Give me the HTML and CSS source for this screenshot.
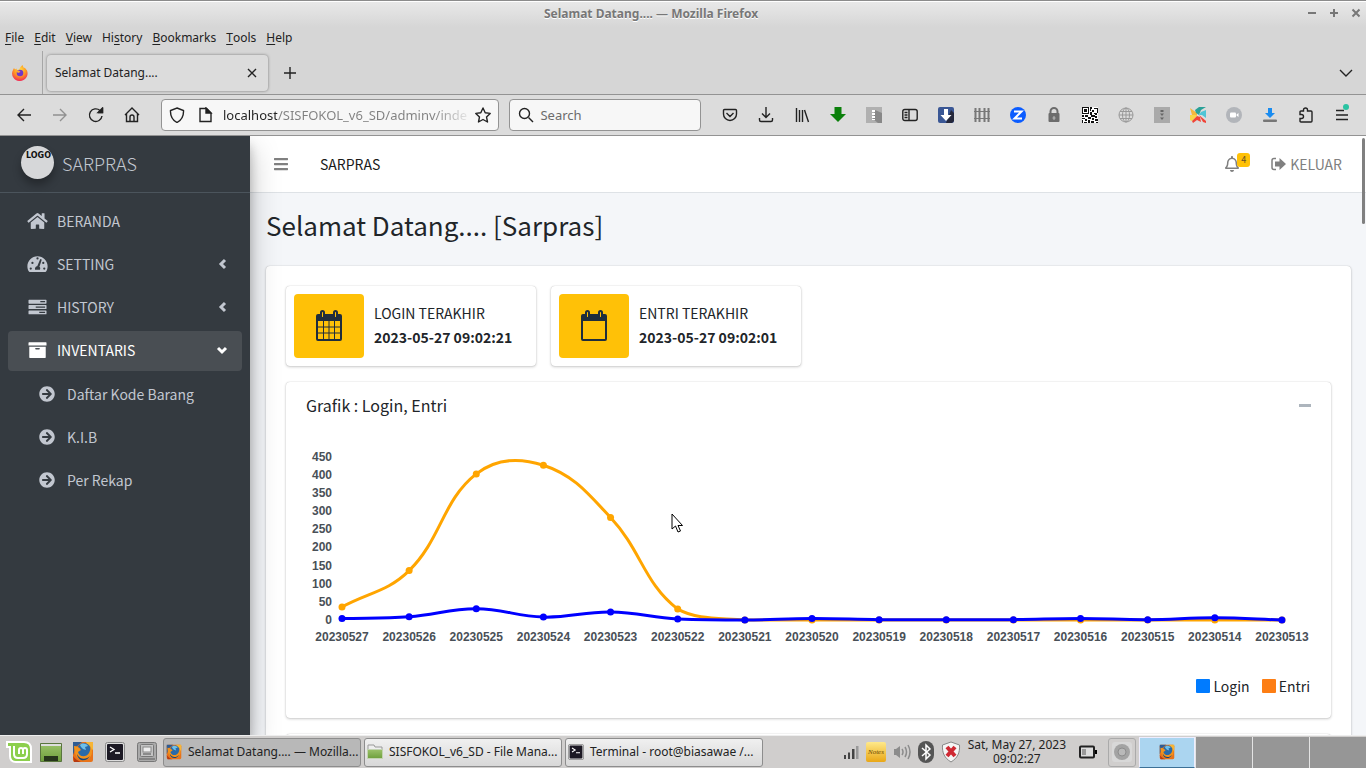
FILE: index.html
```html
<!DOCTYPE html>
<html lang="id">
<head>
<meta charset="utf-8">
<title>Selamat Datang....</title>
<link rel="stylesheet" href="styles.css">
</head>
<body>
<svg class="defs" aria-hidden="true">
  <defs>
    <radialGradient id="fx" cx="50%" cy="30%" r="75%"><stop offset="0" stop-color="#ffe14a"/><stop offset=".5" stop-color="#ff9a1f"/><stop offset="1" stop-color="#f0195e"/></radialGradient>
    <linearGradient id="folder" x2="0" y2="1"><stop offset="0" stop-color="#9bc26a"/><stop offset="1" stop-color="#6e9f3c"/></linearGradient>
    <linearGradient id="note" x2="0" y2="1"><stop offset="0" stop-color="#ffe98a"/><stop offset="1" stop-color="#e9a716"/></linearGradient>
    <symbol id="old-firefox" viewBox="0 0 22 22"><rect x="1" y="1" width="20" height="20" rx="2" fill="#e8731a"/><path d="M1 1h9L4 6 1 14z" fill="#2e5c94"/><path d="M14 1h7v7l-3 4z" fill="#f7b535"/><circle cx="12" cy="9" r="7" fill="#2a6aa8"/><path d="M8 4c3-3 7-1 8 1l-3 1 1 3-3-1-2-2z" fill="#6ec0ea"/><path d="M2 5c3 0 5 1 7 4l-3 2c1 5 8 6 11 1 1-2 2-5 1-7 4 5 2 12-4 14-7 2-12-4-12-14z" fill="#f2921c"/><path d="M5 13c3 6 9 6 13 2-3 6-12 6-13-2z" fill="#13447d"/><path d="M1 15c2 3 5 5 8 6H2z" fill="#b73a12"/></symbol>
    <symbol id="term" viewBox="0 0 20 20"><rect x=".5" y=".5" width="19" height="19" rx="2" fill="#ddd" stroke="#888"/><rect x="2" y="2" width="16" height="16" rx="1" fill="#1c1924"/><path d="M5 5l4 2.500-4 2.500M10 11h5" fill="none" stroke="#fff" stroke-width="1.300"/></symbol>
    <symbol id="go" viewBox="0 0 512 512"><path d="M256 8c137 0 248 111 248 248S393 504 256 504 8 393 8 256 119 8 256 8zm-28.900 143.600l75.500 72.400H120c-13.300 0-24 10.700-24 24v16c0 13.300 10.700 24 24 24h182.600l-75.500 72.400c-9.700 9.300-9.900 24.800-.4 34.300l11 10.900c9.400 9.400 24.600 9.400 33.900 0L404.300 273c9.400-9.400 9.400-24.600 0-33.900L271.600 106.300c-9.400-9.400-24.600-9.400-33.900 0l-11 10.900c-9.500 9.600-9.300 25.100.4 34.400z"/></symbol>
    <symbol id="dl-arrow" viewBox="0 0 16 16"><path d="M4.500 0h7v7H16l-8 8-8-8h4.500z"/></symbol>
  </defs>
</svg>

<header class="titlebar">
  <span class="window-title">Selamat Datang.... — Mozilla Firefox</span>
  <div class="window-controls">
    <button aria-label="Minimize"><svg viewBox="0 0 10 10"><path d="M1 5h8"/></svg></button>
    <button aria-label="Maximize"><svg viewBox="0 0 10 10"><path d="M1 5h8M5 1v8"/></svg></button>
    <button aria-label="Close window"><svg viewBox="0 0 10 10"><path d="M1.500 1.500l7 7M8.500 1.500l-7 7"/></svg></button>
  </div>
</header>
<nav class="menubar" aria-label="Menu">
  <button><u>F</u>ile</button><button><u>E</u>dit</button><button><u>V</u>iew</button><button>Hi<u>s</u>tory</button><button><u>B</u>ookmarks</button><button><u>T</u>ools</button><button><u>H</u>elp</button>
</nav>
<div class="tabstrip">
  <button class="fx-view" aria-label="Firefox View"><svg width="16" height="16" viewBox="0 0 16 16"><path d="M8 16A7.500 7.500 0 0 1 1 5l1-2 1 1.500 1.500-1L5 5l2-.5C8 3 9 1 10.500 0l1 2.500 1.500.5 2 2.500A7.600 7.600 0 0 1 8 16z" fill="url(#fx)"/><circle cx="8" cy="8" r="3.300" fill="#7036c8"/><path d="M4 6c2-1 4 0 4.500 1L6 8z" fill="#ffa436"/></svg></button>
  <div class="tab"><span>Selamat Datang....</span><button aria-label="Close tab"><svg class="ln" width="10" height="10" viewBox="0 0 10 10"><path d="M1 1l8 8M9 1l-8 8"/></svg></button></div>
  <button class="new-tab" aria-label="New tab"><svg class="ln" width="14" height="14" viewBox="0 0 14 14"><path d="M7 1v12M1 7h12"/></svg></button>
  <button class="all-tabs" aria-label="List all tabs"><svg class="ln" width="14" height="8" viewBox="0 0 14 8"><path d="M1 1l6 6 6-6"/></svg></button>
</div>
<div class="toolbar">
  <div class="tools">
    <button aria-label="Back"><svg class="ln" viewBox="0 0 16 16"><path d="M15 8H2M8 2L2 8l6 6"/></svg></button>
    <button aria-label="Forward" disabled><svg class="ln" viewBox="0 0 16 16"><path d="M1 8h13M8 2l6 6-6 6"/></svg></button>
    <button aria-label="Reload"><svg class="ln" viewBox="0 0 16 16"><path d="M14 9A6.300 6.300 0 1 1 12 3.500L14 5M14.500 1v4.500H10"/><path d="M14.500 1v4.500H10z" fill="#222"/></svg></button>
    <button aria-label="Home"><svg class="ln" viewBox="0 0 16 16"><path d="M1 8l7-7 7 7M2.500 7v7.500h11V7M6 14v-4a2 2 0 0 1 4 0v4"/></svg></button>
  </div>
  <div class="field url">
    <svg class="ln" viewBox="0 0 16 16"><path d="M8 1l6.500 2.500c.3 6-2 9.500-6.500 12-4.500-2.500-6.800-6-6.500-12z"/></svg>
    <svg class="ln page" viewBox="0 0 16 16"><path d="M3 1.500h6.500L14 6v8.500H3z"/><path d="M9 1l5 5H9z" fill="#222"/></svg>
    <input type="text" aria-label="Address" value="localhost/SISFOKOL_v6_SD/adminv/index.php">
    <svg class="ln" viewBox="0 0 16 16"><path d="M8 1l2.200 4.700 5 .7-3.700 3.500 1 5.100L8 12.500 3.500 15l1-5.100L.8 6.400l5-.7z" stroke-linejoin="round"/></svg>
  </div>
  <div class="field search">
    <svg class="ln" viewBox="0 0 16 16"><circle cx="6.500" cy="6.500" r="5"/><path d="M10.500 10.500L15 15"/></svg>
    <input type="search" aria-label="Search" placeholder="Search">
  </div>
  <div class="tools">
    <button aria-label="Pocket"><svg class="ln" viewBox="0 0 16 16"><path d="M2.500 2.500h11q1 0 1 1V7a6.500 6.500 0 0 1-13 0V3.500q0-1 1-1zM4.500 6L8 9.500 11.500 6"/></svg></button>
    <button aria-label="Downloads"><svg class="ln" viewBox="0 0 16 16"><path d="M8 0v10M4 6.500L8 10.500l4-4M1.500 11v2q0 1.500 1.500 1.500h10q1.500 0 1.500-1.500v-2"/></svg></button>
    <button aria-label="Library"><svg class="ln" viewBox="0 0 16 16"><path d="M2.500 1v14M5.500 3v12M8.500 3v12M10.500 3l4 12"/></svg></button>
    <button aria-label="Download helper"><svg viewBox="0 0 16 16" fill="#0b800b"><use href="#dl-arrow"/></svg></button>
    <button aria-label="Archive"><svg viewBox="0 0 16 16"><path fill="#b0b0b0" d="M0 0h16v16H0z"/><path fill="#888" d="M9 3l7 3v10H12l-5-4z"/><path stroke="#fff" stroke-width="3" stroke-dasharray="2 1" d="M7.500 3v10"/></svg></button>
    <button aria-label="Sidebars"><svg class="ln" viewBox="0 0 16 16"><rect x=".8" y="2.500" width="14.400" height="11" rx="2"/><path d="M7 2.500v11M2.500 5.500h3M2.500 8h3M2.500 10.500h3"/></svg></button>
    <button aria-label="Save"><svg viewBox="0 0 16 16"><rect width="16" height="16" rx="2" fill="#3a5795"/><path d="M13 3l3 3v8l-2 2H8z" fill="#24273a"/><path d="M6 2h4v6h3.500L8 14 2.500 8H6z" fill="#fff"/></svg></button>
    <button aria-label="Grid"><svg viewBox="0 0 16 16"><path d="M1.500 1v14M5.500 1v14M10.500 1v14M14.500 1v14" stroke="#777" stroke-width="2"/><path d="M0 4.500h16M0 11.500h16" stroke="#777"/></svg></button>
    <button aria-label="Zoom"><svg viewBox="0 0 16 16"><circle cx="8" cy="8" r="8" fill="#0b5cff"/><path d="M4 4.500h7.500l-7 7H12" fill="none" stroke="#fff" stroke-width="2"/></svg></button>
    <button aria-label="Lock"><svg viewBox="0 0 16 16"><path d="M4.500 8V4.500a3.500 3.500 0 0 1 7 0V8" fill="none" stroke="#6c6c6c" stroke-width="2"/><rect x="2.500" y="6" width="11" height="9" rx="1" fill="#6c6c6c"/><path d="M8 9v4M6.500 11h3" stroke="#bbb"/></svg></button>
    <button aria-label="QR code"><svg viewBox="0 0 16 16" shape-rendering="crispEdges"><path fill="#fff" d="M0 0h16v16H0z"/><path fill="#111" fill-rule="evenodd" d="M0 0h7v7H0zm1 1v5h5V1zM2 2h3v3H2zM12 1h4v5h-1V2h-3zM8 0h2v2H8zM10 3h2v2h-2zM8 5h2v3H8zM12 6h3v2h-3zM0 8h2v2H0zM3 8h3v2H3zM6 10h3v2H6zM0 11h3v1H0zM3 12h2v2H3zM0 13h1v3H0zM2 15h3v1H2zM6 13h2v3H6zM9 8h3v2H9zM13 9h2v2h-2zM10 11h2v2h-2zM9 14h3v2H9zM13 12h3v2h-3zM14 15h2v1h-2zM8 2h1v2H8zM12 7h1v3h-1z"/></svg></button>
    <button aria-label="Network"><svg viewBox="0 0 16 16" fill="none" stroke="#999"><circle cx="8" cy="8" r="7"/><ellipse cx="8" cy="8" rx="3.500" ry="7"/><path d="M8 1v14M1 8h14M2 4.500h12M2 11.500h12"/></svg></button>
    <button aria-label="Compress"><svg viewBox="0 0 16 16"><path fill="#aaa" d="M0 0h16v16H0z"/><path fill="#666" d="M6.500 3h3v2h-3zM6 6.500h4L8 9zM6 10.500h4L8 13z"/></svg></button>
    <button aria-label="Pinwheel"><svg viewBox="0 0 16 16"><path fill="#f5b83d" d="M0 1l7 5v3L2 8z"/><path fill="#f9d548" d="M0 8l6 0 1 1-5 5-2-1z"/><path fill="#2aa198" d="M5 3l4-3h7l-5 3-2 5-3-2z"/><path fill="#4fc5d6" d="M11 5l5-2v8l-4-3-3 0z"/><path fill="#f04438" d="M7 9l3 1 1 5-4-2-4 3-1-2z"/><path fill="#f04438" d="M9 8l7 6v2l-3-1z"/></svg></button>
    <button aria-label="Meetings"><svg viewBox="0 0 16 16"><circle cx="8" cy="8" r="8" fill="#b2b5ba"/><rect x="4" y="5.500" width="6" height="5" rx="1" fill="#fff"/><path d="M10.500 7.500l2-1.500v4l-2-1.500z" fill="#fff"/></svg></button>
    <button aria-label="Download manager"><svg viewBox="0 0 16 16"><path d="M6 1h4v5h3l-5 5-5-5h3z" fill="#1a8cf0"/><rect x="1" y="12.500" width="14" height="2.500" rx="1" fill="#777"/></svg></button>
    <button aria-label="Extensions"><svg class="ln" viewBox="0 0 16 16"><path d="M2 5q0-1 1-1h2.500V3a2 2 0 0 1 4 0v1H13q1 0 1 1v9q0 1-1 1H3q-1 0-1-1v-2.500h1.500a2 2 0 0 0 0-4H2z"/></svg></button>
    <button aria-label="Application menu" class="app-menu"><svg class="ln" viewBox="0 0 16 16"><path d="M2 3.500h8M2 8h12M2 12.500h12"/></svg><i></i></button>
  </div>
</div>

<div class="viewport">
  <aside class="sidebar">
    <a class="brand" href="#"><span class="logo">LOGO</span><span>SARPRAS</span></a>
    <nav aria-label="Sidebar">
      <a href="#"><svg viewBox="0 0 576 512"><path d="M280.370 148.260L96 300.110V464a16 16 0 0 0 16 16l112.060-.29a16 16 0 0 0 15.920-16V368a16 16 0 0 1 16-16h64a16 16 0 0 1 16 16v95.640a16 16 0 0 0 16 16.050L464 480a16 16 0 0 0 16-16V300L295.670 148.260a12.190 12.190 0 0 0-15.300 0zM571.600 251.470L488 182.560V44.050a12 12 0 0 0-12-12h-56a12 12 0 0 0-12 12v72.610L318.470 43a48 48 0 0 0-61 0L4.340 251.470a12 12 0 0 0-1.600 16.900l25.500 31A12 12 0 0 0 45.150 301l235.220-193.740a12.190 12.190 0 0 1 15.300 0L530.900 301a12 12 0 0 0 16.900-1.600l25.500-31a12 12 0 0 0-1.700-16.930z"/></svg><span>BERANDA</span></a>
      <a href="#"><svg viewBox="0 0 576 512"><path fill-rule="evenodd" d="M288 32C129 32 0 161 0 320c0 53 14 102 39 145 6 9 16 15 27 15h444c11 0 21-6 27-15 25-43 39-92 39-145C576 161 447 32 288 32zM288 64a32 32 0 1 1 0 64 32 32 0 1 1 0-64zM96 352a32 32 0 1 1 0 64 32 32 0 1 1 0-64zm48-160a32 32 0 1 1 0 64 32 32 0 1 1 0-64zm214-59c4-13 18-20 31-16 12 4 19 18 15 31l-61 184c25 20 30 50 14 84H219c-14-45 13-92 61-96zm94 59a32 32 0 1 1 0 64 32 32 0 1 1 0-64zm28 160a32 32 0 1 1 0 64 32 32 0 1 1 0-64z"/></svg><span>SETTING</span><svg class="chev" viewBox="0 0 12 12"><path d="M9 2L5 6l4 4"/></svg></a>
      <a href="#"><svg viewBox="0 0 576 512"><path fill-rule="evenodd" d="M48 48h480q16 0 16 16v80q0 16-16 16H48q-16 0-16-16V64q0-16 16-16zm320 40v34h136V88zM48 200h480q16 0 16 16v80q0 16-16 16H48q-16 0-16-16v-80q0-16 16-16zm190 40v34h266v-34zM48 352h480q16 0 16 16v80q0 16-16 16H48q-16 0-16-16v-80q0-16 16-16zm290 40v34h166v-34z"/></svg><span>HISTORY</span><svg class="chev" viewBox="0 0 12 12"><path d="M9 2L5 6l4 4"/></svg></a>
      <a href="#" class="active"><svg viewBox="0 0 576 512"><path fill-rule="evenodd" d="M48 32h480q16 0 16 16v80H32V48q0-16 16-16zM54 160h468v304q0 16-16 16H70q-16 0-16-16zm170 48v12q0 20 20 20h88q20 0 20-20v-12q0-8-8-8H232q-8 0-8 8z"/></svg><span>INVENTARIS</span><svg class="chev" viewBox="0 0 12 12"><path d="M2 4l4 4 4-4"/></svg></a>
      <a href="#" class="sub"><svg><use href="#go"/></svg><span>Daftar Kode Barang</span></a>
      <a href="#" class="sub"><svg><use href="#go"/></svg><span>K.I.B</span></a>
      <a href="#" class="sub"><svg><use href="#go"/></svg><span>Per Rekap</span></a>
    </nav>
  </aside>
  <div class="page-area">
    <header class="topnav">
      <button class="burger" aria-label="Toggle sidebar"><svg width="14" height="16" viewBox="0 0 448 512"><path d="M16 132h416c9 0 16-7 16-16V76c0-9-7-16-16-16H16C7 60 0 67 0 76v40c0 9 7 16 16 16zm0 160h416c9 0 16-7 16-16v-40c0-9-7-16-16-16H16c-9 0-16 7-16 16v40c0 9 7 16 16 16zm0 160h416c9 0 16-7 16-16v-40c0-9-7-16-16-16H16c-9 0-16 7-16 16v40c0 9 7 16 16 16z"/></svg></button>
      <a class="section" href="#">SARPRAS</a>
      <a class="bell" href="#" aria-label="Notifications"><svg width="14" height="16" viewBox="0 0 448 512"><path d="M439.390 362.290c-19.320-20.760-55.470-51.990-55.470-154.290 0-77.700-54.480-139.900-127.940-155.160V32c0-17.670-14.320-32-31.980-32s-31.980 14.330-31.980 32v20.840C118.560 68.100 64.080 130.300 64.080 208c0 102.300-36.150 133.530-55.470 154.290-6 6.450-8.660 14.160-8.610 21.710.11 16.400 12.980 32 32.100 32h383.800c19.120 0 32-15.600 32.100-32 .05-7.550-2.610-15.270-8.610-21.710zM67.530 368c21.220-27.970 44.420-74.330 44.530-159.420 0-.2-.06-.38-.06-.58 0-61.860 50.140-112 112-112s112 50.140 112 112c0 .2-.06.38-.06.58.11 85.100 23.310 131.460 44.530 159.420H67.530zM224 512c35.320 0 63.970-28.650 63.970-64H160.030c0 35.350 28.650 64 63.970 64z"/></svg><b>4</b></a>
      <a class="logout" href="#"><svg width="15" height="14" viewBox="0 0 15 14"><path d="M5 1.500H3q-2 0-2 2v7q0 2 2 2h2" fill="none" stroke="currentColor" stroke-width="1.500"/><path d="M4 4.500H8.500V1L15 7l-6.500 6V9.500h-4.500z"/></svg>KELUAR</a>
    </header>
    <main>
      <h1>Selamat Datang.... [Sarpras]</h1>
      <section class="card outer">
        <div class="infos">
          <div class="card info">
            <span class="tile"><svg width="30" height="34" viewBox="0 0 30 34"><path fill-rule="evenodd" d="M4 5h22q2 0 2 2v23q0 2-2 2H4q-2 0-2-2V7q0-2 2-2zm0 7v18h22V12z"/><path d="M9.500 11v19M15 11v19M20.500 11v19M4 18h22M4 24h22" stroke="#1f2d3d"/><g fill="#ffc107" stroke="#1f2d3d" stroke-width="2"><rect x="7" y="2" width="3" height="7" rx="1.500"/><rect x="20" y="2" width="3" height="7" rx="1.500"/></g></svg></span>
            <p>LOGIN TERAKHIR<strong>2023-05-27 09:02:21</strong></p>
          </div>
          <div class="card info">
            <span class="tile"><svg width="30" height="34" viewBox="0 0 30 34"><path fill-rule="evenodd" d="M4 5h22q2 0 2 2v23q0 2-2 2H4q-2 0-2-2V7q0-2 2-2zm0 7v18h22V12z"/><g fill="#ffc107" stroke="#1f2d3d" stroke-width="2"><rect x="7" y="2" width="3" height="7" rx="1.500"/><rect x="20" y="2" width="3" height="7" rx="1.500"/></g></svg></span>
            <p>ENTRI TERAKHIR<strong>2023-05-27 09:02:01</strong></p>
          </div>
        </div>
        <article class="card chart-card">
          <header><h2>Grafik : Login, Entri</h2><button aria-label="Collapse"><svg width="12" height="3" viewBox="0 0 12 3"><path d="M0 0h12v3H0z"/></svg></button></header>
          <svg class="chart" id="chart" viewBox="0 0 1005 200" role="img" aria-label="Grafik Login, Entri"></svg>
          <div class="legend"><span><i class="login"></i>Login</span><span><i class="entri"></i>Entri</span></div>
        </article>
        <article class="card next-card"></article>
      </section>
    </main>
    <i class="scroll-thumb"></i>
  </div>
  <svg class="pointer" width="12" height="20" viewBox="0 0 12 20"><path d="M1 1v15l3.500-3 2.500 6 2.500-1L7 12.500h4.500z" fill="#fff" stroke="#000"/></svg>
</div>

<footer class="taskbar">
  <div class="launchers">
    <button aria-label="Menu"><svg width="26" height="22" viewBox="0 0 26 22"><path d="M1 1h17q7 0 7 7v13H10q-6 0-6-6V6H1z" fill="#8ccf4d" stroke="#fff" stroke-width="2"/><path d="M8 5v8q0 4 4 4h5q4 0 4-4V9q0-2-2-2t-2 2v4M17 9q0-2-2-2t-2 2v4" fill="none" stroke="#fff" stroke-width="2"/></svg></button>
    <button aria-label="Show desktop"><svg width="22" height="19" viewBox="0 0 22 19"><path d="M.5.500h21v18H.5z" fill="url(#folder)" stroke="#59753e"/><path d="M1 1h20v2H1z" fill="#ddd"/><path d="M4 13h14v5H4z" fill="#26351b"/></svg></button>
    <button aria-label="Firefox"><svg width="22" height="22"><use href="#old-firefox"/></svg></button>
    <button aria-label="Terminal"><svg width="20" height="20"><use href="#term"/></svg></button>
    <button aria-label="Files"><svg width="20" height="20" viewBox="0 0 20 20"><rect x=".5" y=".5" width="19" height="19" rx="2" fill="#aaa" stroke="#777"/><rect x="3.500" y="2.500" width="13" height="12" rx="1" fill="#c4c4c4" stroke="#777"/><rect x="6" y="5" width="8" height="5" fill="#eee" stroke="#888"/><path d="M6 12h8M2 17h16" stroke="#777" stroke-width="1.500"/></svg></button>
  </div>
  <div class="tasks">
    <button class="on"><svg width="16" height="16"><use href="#old-firefox"/></svg><span>Selamat Datang.... — Mozilla...</span></button>
    <button><svg width="16" height="16" viewBox="0 0 16 16"><path d="M1 1h6l1 2h7v4H1z" fill="#eee" stroke="#999"/><path d="M.5 5.500h15v9H.5z" fill="url(#folder)" stroke="#c3d3b2"/></svg><span>SISFOKOL_v6_SD - File Mana...</span></button>
    <button><svg width="16" height="16" viewBox="0 0 20 20"><use href="#term"/></svg><span>Terminal - root@biasawae /...</span></button>
  </div>
  <div class="tray">
    <svg width="16" height="16" viewBox="0 0 16 16" fill="#444"><path d="M1 11h2v4H1zM5 8.500h2V15H5zM9 5h2.500v10H9z"/><path d="M13 2h2.500v13H13z" fill="#999"/></svg>
    <svg width="20" height="20" viewBox="0 0 20 20"><rect width="20" height="20" rx="2" fill="url(#note)"/><text x="2" y="12" class="note-text">Notes</text></svg>
    <svg width="18" height="18" viewBox="0 0 18 18" fill="none" stroke="#8c8c8c" stroke-width="1.500"><path d="M1 6h2l4-3v12l-4-3H1z" fill="#8c8c8c" stroke="none"/><path d="M9 6q2 3 0 6M12 4q3 5 0 10M15 2q4 7 0 14"/></svg>
    <svg width="16" height="22" viewBox="0 0 16 22"><rect width="16" height="22" rx="8" fill="#555"/><path d="M4 7l8 7-4 4V4l4 4-8 7" fill="none" stroke="#fff" stroke-width="1.500"/></svg>
    <svg width="20" height="22" viewBox="0 0 20 22"><path d="M10 1l8.500 3c.5 8-2 13-8.500 17C3.500 17 1 12 1.500 4z" fill="#f5f5f5" stroke="#888"/><path d="M6 6l8 9M14 6l-8 9" stroke="#cf2933" stroke-width="4"/></svg>
  </div>
  <time><span>Sat, May 27, 2023</span><span>09:02:27</span></time>
  <svg class="battery" width="18" height="14" viewBox="0 0 18 14"><rect x="1" y="1.500" width="14" height="11" rx="1" fill="#ddd" stroke="#222" stroke-width="2"/><path d="M3 4h4v6H3z" fill="#999"/><path d="M16 5h2v4h-2z"/></svg>
  <button class="gear" aria-label="Panel plugin"><svg width="20" height="20" viewBox="0 0 20 20"><rect width="20" height="20" rx="3" fill="#d8d8d8"/><circle cx="10" cy="10" r="8" fill="#a3a3a3"/><circle cx="10" cy="10" r="4" fill="#b9b9b9" stroke="#8d8d8d"/></svg></button>
  <div class="workspaces"><button class="on" aria-label="Workspace 1"><svg width="16" height="16"><use href="#old-firefox"/></svg></button><button aria-label="Workspace 2"></button><button aria-label="Workspace 3"></button><button aria-label="Workspace 4"></button></div>
</footer>
<script src="chart.js"></script>
</body>
</html>
```
FILE: styles.css
```css
* { box-sizing: border-box; }
body {
  margin: 0;
  height: 100vh;
  display: flex;
  flex-direction: column;
  overflow: hidden;
  background: #d6d6d6;
  color: #222;
  font: 12px/16px "Noto Sans", sans-serif;
}
button {
  padding: 0;
  border: 0;
  background: none;
  color: inherit;
  font: inherit;
  display: flex;
  align-items: center;
  justify-content: center;
}
a { color: inherit; text-decoration: none; }
svg { flex: none; display: block; }
.defs { position: absolute; width: 0; height: 0; }
.ln { fill: none; stroke: #222; stroke-width: 1.4; }

.titlebar {
  display: flex;
  height: 27px;
  align-items: center;
  justify-content: center;
  position: relative;
  border-top: 1px solid #8c8c8c;
  box-shadow: inset 0 1px #fff;
  background: linear-gradient(#e9e9e9, #d6d6d6);
}
.window-title { padding-right: 64px; color: #777; font-weight: bold; text-shadow: 0 1px #fff; }
.window-controls { position: absolute; right: 5px; top: 7px; display: flex; gap: 12px; }
.window-controls svg { width: 10px; height: 10px; stroke: #777; stroke-width: 2; }

.menubar { display: flex; height: 22px; padding-left: 5px; gap: 10px; }
.menubar u { text-underline-offset: 2px; }

.tabstrip {
  display: flex;
  align-items: center;
  height: 46px;
  padding-top: 2px;
  border-bottom: 1px solid #939393;
}
.fx-view { width: 43px; height: 43px; padding-right: 3px; border-right: 1px solid #a6a6a6; }
.tab {
  display: flex;
  align-items: center;
  justify-content: space-between;
  width: 221px;
  height: 36px;
  margin-left: 4px;
  padding: 0 11px 0 8px;
  border-radius: 4px;
  background: #dcdcdc;
  box-shadow: 0 0 3px #777;
}
.new-tab { margin-left: 15px; }
.all-tabs { margin-left: auto; margin-right: 13px; }

.toolbar {
  display: flex;
  align-items: center;
  height: 41px;
  padding: 0 6px;
  border-bottom: 1px solid #939393;
  background: #dcdcdc;
}
.tools { display: flex; flex: none; }
.tools button { width: 36px; height: 32px; }
.tools svg { width: 16px; height: 16px; }
.tools button:disabled { opacity: .4; }
.app-menu { position: relative; }
.app-menu i { position: absolute; right: 11px; top: 5px; width: 6px; height: 6px; border-radius: 50%; background: #2ac3a2; }
.field {
  display: flex;
  align-items: center;
  min-width: 0;
  height: 32px;
  border: 1px solid #939393;
  border-radius: 4px;
  background: #f7f7f7;
}
.field svg { width: 16px; height: 16px; }
.field input {
  flex: 1;
  min-width: 0;
  border: 0;
  padding: 0;
  outline: 0;
  background: none;
  color: #222;
  font: 13px/20px "Noto Sans", sans-serif;
}
.field input::placeholder { color: #6c6c6c; opacity: 1; }
.url { flex: 13 1 0; margin-left: 11px; padding: 0 7px; }
.url .page { margin: 0 10px 0 12px; }
.url input {
  margin-right: 8px;
  color: transparent;
  background: linear-gradient(90deg, #222 54px, #808080 54px, #808080 210px, transparent 250px);
  background-clip: text;
  -webkit-background-clip: text;
}
.search { flex: 7 1 0; margin: 0 11px 0 10px; padding: 0 8px; gap: 6px; }

.viewport {
  position: relative;
  flex: 1;
  min-height: 0;
  display: flex;
  overflow: hidden;
  background: #f4f6f9;
  color: #212529;
  font: 14px/24px "Noto Sans CJK SC", sans-serif;
}
.sidebar {
  position: relative;
  z-index: 1;
  flex: none;
  width: 250px;
  background: #343a40;
  color: #c2c7d0;
  box-shadow: 0 14px 28px rgba(0, 0, 0, .25), 0 10px 10px rgba(0, 0, 0, .22);
}
.brand {
  display: flex;
  align-items: center;
  gap: 8px;
  height: 57px;
  padding: 0 21px 3px;
  border-bottom: 1px solid #4b545c;
  font-size: 18px;
  font-weight: 300;
}
.logo {
  width: 33px;
  height: 33px;
  overflow: hidden;
  padding-left: 5px;
  border-radius: 50%;
  background: #d6d7d9;
  color: #111;
  font: bold 8px/19px "DejaVu Sans", sans-serif;
  box-shadow: 0 6px 8px rgba(0, 0, 0, .3);
}
.sidebar nav { display: flex; flex-direction: column; gap: 3px; padding: 9px 8px; }
.sidebar nav a {
  display: flex;
  align-items: center;
  gap: 9px;
  height: 40px;
  padding: 0 14px 2px 19px;
  border-radius: 4px;
}
.sidebar nav svg { width: 21px; height: 18px; fill: currentColor; }
.sidebar nav .chev { width: 12px; height: 12px; margin-left: auto; fill: none; stroke: currentColor; stroke-width: 3; }
.sidebar nav .active { background: #494e53; color: #fff; }
.sidebar nav .sub { padding: 0 14px 1px 31px; gap: 12px; }
.sidebar nav .sub svg { width: 16px; height: 16px; }

.page-area { position: relative; flex: 1; min-width: 0; }
.topnav {
  display: flex;
  align-items: center;
  height: 57px;
  padding: 0 24px;
  border-bottom: 1px solid #dee2e6;
  background: #fff;
  color: #808080;
}
.topnav svg { fill: currentColor; }
.section { margin-left: 32px; color: #1a1a1a; }
.bell { position: relative; margin-left: auto; }
.bell b {
  position: absolute;
  left: 12px;
  top: -3px;
  width: 13px;
  height: 14px;
  border-radius: 3px;
  background: #ffc107;
  color: #665229;
  font-size: 9px;
  font-weight: 400;
  line-height: 14px;
  text-align: center;
}
.logout { display: flex; align-items: center; gap: 4px; margin-left: 32px; }
main { padding: 13px 15px 0 16px; }
h1 { margin: 0; font-size: 26px; font-weight: 400; line-height: 38px; }
.card { border-radius: 4px; background: #fff; box-shadow: 0 0 1px rgba(0, 0, 0, .25), 0 1px 3px rgba(0, 0, 0, .2); }
.outer { display: grid; gap: 16px; margin-top: 22px; padding: 20px; }
.infos { display: flex; gap: 15px; }
.info { display: flex; gap: 10px; width: 250px; padding: 8px; }
.tile { display: flex; align-items: center; justify-content: center; width: 70px; height: 64px; border-radius: 4px; background: #ffc107; fill: #1f2d3d; }
.info p { margin: 7px 0 0; }
.info strong { display: block; }
.chart-card { padding: 0 20px 20px; }
.chart-card header { display: flex; align-items: center; justify-content: space-between; height: 46px; }
.chart-card header svg { fill: #adb5bd; }
h2 { margin: 0; font-size: 16px; font-weight: 400; line-height: 24px; }
.chart { width: 100%; margin-top: 17px; overflow: visible; font: bold 12px "Liberation Sans", sans-serif; fill: #495057; }
.chart path { fill: none; stroke-width: 3; }
.legend { display: flex; justify-content: flex-end; gap: 12px; padding: 29px 1px 0 0; }
.legend span { display: flex; align-items: center; gap: 3px; }
.legend i { width: 14px; height: 14px; border-radius: 1px; }
.login { background: #007bff; }
.entri { background: #fd7e14; }
.next-card { height: 80px; }
.scroll-thumb { position: absolute; right: 1px; top: 2px; width: 3px; height: 86px; border-radius: 2px; background: #808080; }
.pointer { position: absolute; z-index: 2; left: 671px; top: 377px; }

.taskbar {
  display: flex;
  align-items: center;
  height: 33px;
  padding-left: 3px;
  border-top: 1px solid #eee;
  background: #d0cecd;
}
.launchers { display: flex; }
.launchers button { width: 32px; height: 28px; }
.tasks { display: flex; gap: 3px; }
.tasks button {
  width: 198px;
  height: 29px;
  padding: 0 2px;
  gap: 6px;
  justify-content: flex-start;
  border: 1px solid #8d8d8d;
  border-radius: 3px;
  background: linear-gradient(#f0f0f0, #d8d8d8);
  white-space: nowrap;
}
.tasks .on { background: #b8b8b8; }
.tray { display: flex; align-items: center; gap: 7px; margin-left: auto; }
.note-text { font: italic 7px "Liberation Serif", serif; fill: #6a4700; }
time { display: flex; flex-direction: column; align-items: center; margin-left: 7px; line-height: 14px; }
.battery { margin-left: 13px; }
.gear { width: 28px; height: 29px; margin-left: 11px; border: 1px solid #aaa; border-radius: 3px; }
.workspaces { display: flex; gap: 1px; margin-left: 3px; background: #e4e4e4; }
.workspaces button { width: 56px; height: 31px; background: #969696; }
.workspaces .on { border: 1px solid #eef; border-bottom-color: #3c7096; background: #abd5f0; }
```
FILE: chart.js
```js
const entri = [36, 136, 402, 426, 282, 30, 0, 0, 0, 0, 0, 0, 0, 0, 0];
const login = [4, 9, 31, 8, 22, 3, 0, 4, 1, 1, 1, 4, 1, 6, 0];
const svg = document.getElementById('chart');
const left = 36, step = 67.14, base = 175, unit = 163.5 / 450;

function add(tag, attrs, text) {
  const el = document.createElementNS('http://www.w3.org/2000/svg', tag);
  for (const key in attrs) el.setAttribute(key, attrs[key]);
  if (text !== undefined) el.textContent = text;
  svg.appendChild(el);
}

// Smooth line through the points, with tension 0.4
function series(values, color) {
  const pts = values.map((v, i) => [left + i * step, base - v * unit]);
  const dist = (a, b) => Math.hypot(a[0] - b[0], a[1] - b[1]);
  const handles = pts.map((p, i) => {
    const a = pts[i - 1] || p, b = pts[i + 1] || p;
    const d1 = dist(a, p), d2 = dist(p, b), sum = d1 + d2;
    const f1 = 0.4 * d1 / sum, f2 = 0.4 * d2 / sum;
    const dx = b[0] - a[0], dy = b[1] - a[1];
    const cap = y => Math.min(base, y);
    return [[p[0] - f1 * dx, cap(p[1] - f1 * dy)], [p[0] + f2 * dx, cap(p[1] + f2 * dy)]];
  });
  let d = 'M' + pts[0];
  for (let i = 1; i < pts.length; i++) d += ' C' + [handles[i - 1][1], handles[i][0], pts[i]].join(' ');
  add('path', { d, stroke: color });
  pts.forEach(p => add('circle', { cx: p[0], cy: p[1], r: 3.5, fill: color }));
}

for (let v = 0; v <= 450; v += 50) {
  add('text', { x: 26, y: base - v * unit + 4, 'text-anchor': 'end' }, v);
}
for (let i = 0; i < 15; i++) {
  add('text', { x: left + i * step, y: base + 21, 'text-anchor': 'middle' }, 20230527 - i);
}
series(entri, 'orange');
series(login, 'blue');
```
